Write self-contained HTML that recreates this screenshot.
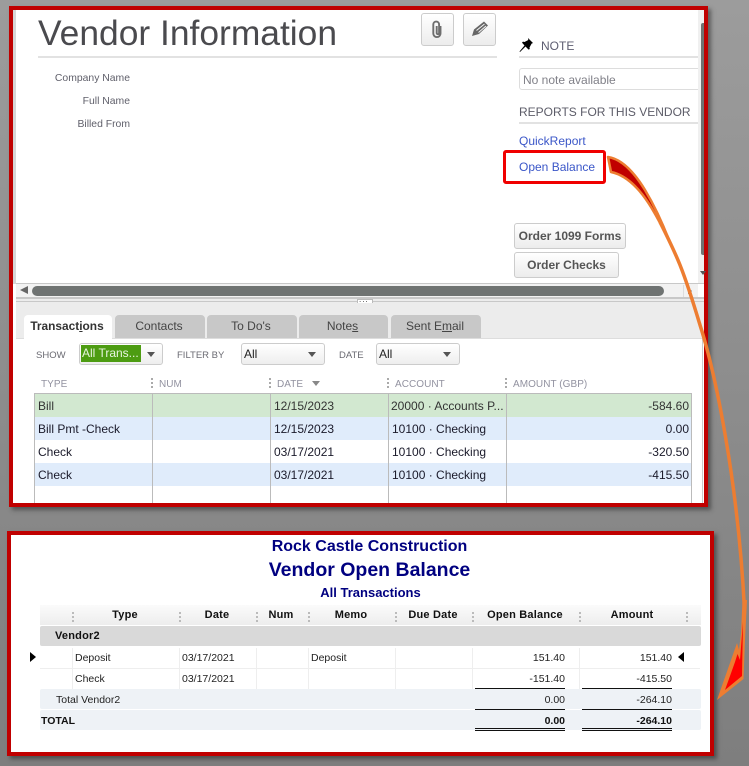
<!DOCTYPE html>
<html><head><meta charset="utf-8">
<style>
html,body{margin:0;padding:0}
body{width:749px;height:766px;overflow:hidden;position:relative;background:linear-gradient(#9c9c9c,#7e7e7e);font-family:"Liberation Sans",sans-serif;}
div,span.a{position:absolute;box-sizing:border-box}
.t{white-space:nowrap;line-height:14px;height:14px}
.lab{font-size:10.4px;color:#5f5f6a;width:100px;text-align:right;left:30px;margin-top:1px}
.btn{background:linear-gradient(#fff,#ececec);border:1px solid #ccc;border-radius:3px}
.ob{font-weight:bold;font-size:12px;color:#555;text-align:center;line-height:24px;white-space:nowrap}
.tab{top:315px;height:23px;background:#c8c8c8;border-radius:4px 4px 0 0;font-size:12px;color:#444;text-align:center;line-height:22px}
.f{font-size:9.5px;color:#6a6a72;top:349px}
.sel{top:343px;height:22px;width:84px;border:1px solid #ccc;border-radius:3px;background:linear-gradient(#fff,#eee)}
.arr{width:0;height:0;border-left:4.5px solid transparent;border-right:4.5px solid transparent;border-top:5px solid #555}
.h{font-size:10px;color:#9292a0;top:378px;letter-spacing:.05px}
.d{width:2px;height:12px;top:378px;background:repeating-linear-gradient(#aaa 0 2px,transparent 2px 4px)}
.r{left:35px;width:657px;height:23px}
.c{font-size:12px;color:#1a1a2a;white-space:nowrap;line-height:14px;margin-top:1px}
.v{top:393px;height:110px;width:1px;background:#bbb}
.rh{font-size:11px;font-weight:bold;color:#111;top:608px;line-height:14px;white-space:nowrap;text-align:center;letter-spacing:.2px}
.dd{width:2px;height:12px;top:612px;background:repeating-linear-gradient(#bbb 0 2px,transparent 2px 4px)}
.rc{font-size:10.5px;color:#222;line-height:14px;white-space:nowrap;margin-top:1px}
.rn{text-align:right;width:90px}
.vl{top:648px;height:41px;width:1px;background:#eee}
.k{height:1px;background:#111;width:90px}
.title{left:21px;width:699px;text-align:center;color:#000080;font-weight:bold;white-space:nowrap}
</style></head><body>

<!-- top panel -->
<div style="left:9px;top:6px;width:699px;height:501px;background:#fff;border:4px solid #c00000;box-shadow:3px 3px 4px rgba(40,40,40,.55)"></div>
<div style="left:13px;top:10px;width:3px;height:274px;background:#d6d6d6"></div>

<div class="t" style="left:38px;top:13px;height:40px;line-height:40px;font-size:35.4px;color:#4a4a4e">Vendor Information</div>
<div style="left:38px;top:56px;width:459px;height:2px;background:#e2e2e2"></div>
<div class="t lab" style="top:71px">Company Name</div>
<div class="t lab" style="top:94px">Full Name</div>
<div class="t lab" style="top:117px">Billed From</div>

<div class="btn" style="left:421px;top:13px;width:33px;height:33px">
<svg width="31" height="31" style="position:absolute;left:0;top:0"><path d="M18.5 12 V19.5 a3.6 3.6 0 0 1-7.2 0 V10.5 a2.9 2.9 0 0 1 5.8 0 V19 a1.2 1.2 0 0 1-2.4 0 V12" fill="none" stroke="#6e6e6e" stroke-width="1.9"/></svg></div>
<div class="btn" style="left:463px;top:13px;width:33px;height:33px">
<svg width="31" height="31" style="position:absolute;left:0;top:0"><path d="M8 22 L10 15.5 L20 7.5 L24 11.5 L15 20 Z" fill="#666"/><path d="M12.5 16.5 L20.5 10 M14.5 18.5 L22 12" stroke="#f4f4f4" stroke-width="1"/></svg></div>

<svg width="16" height="16" style="position:absolute;left:519px;top:37px"><path d="M9 1 L14 6 L12.6 6.6 L10.5 10.5 L10.8 12 L9.6 12.6 L6.5 9.5 L1 15 L0.5 14.5 L5.5 8.5 L3 5.6 L4 4.6 L5.5 5 L9.3 3 Z" fill="#000"/></svg>
<div class="t" style="left:541px;top:39px;font-size:12px;color:#5c5c70">NOTE</div>
<div style="left:519px;top:56px;width:179px;height:2px;background:#e2e2e2"></div>
<div style="left:519px;top:68px;width:185px;height:22px;border:1px solid #ddd;border-radius:3px;background:#fff"></div>
<div class="t" style="left:523px;top:73px;font-size:12px;color:#808088">No note available</div>
<div class="t" style="left:519px;top:105px;font-size:12px;color:#5c5c68">REPORTS FOR THIS VENDOR</div>
<div style="left:519px;top:122px;width:179px;height:2px;background:#e2e2e2"></div>
<div class="t" style="left:519px;top:134px;font-size:12px;color:#3a56c8">QuickReport</div>
<div class="t" style="left:519px;top:160px;font-size:12px;color:#3a56c8">Open Balance</div>
<div style="left:503px;top:150px;width:103px;height:34px;border:3px solid #f00000;border-radius:3px"></div>

<div class="btn ob" style="left:514px;top:223px;width:112px;height:26px">Order 1099 Forms</div>
<div class="btn ob" style="left:514px;top:252px;width:105px;height:26px">Order Checks</div>

<!-- scrollbars -->
<div style="left:698px;top:10px;width:6px;height:274px;background:#f0f0f0"></div>
<div style="left:701px;top:23px;width:3px;height:232px;background:#6f7372;border-radius:2px 0 0 2px"></div>
<div style="left:16px;top:283px;width:688px;height:1px;background:#c8c8c8"></div>
<div style="left:16px;top:284px;width:682px;height:13px;background:#f2f2f2"></div>
<div style="left:32px;top:286px;width:632px;height:10px;background:#6f7372;border-radius:5px"></div>
<div style="left:20px;top:286px;width:0;height:0;border-right:8px solid #666;border-top:4.5px solid transparent;border-bottom:4.5px solid transparent"></div>
<div style="left:683px;top:285px;width:1px;height:12px;background:#ddd"></div>
<div style="left:688px;top:288px;width:0;height:0;border-left:4px solid #555;border-top:3px solid transparent;border-bottom:3px solid transparent"></div>
<div style="left:700px;top:271px;width:0;height:0;border-top:4px solid #555;border-left:3px solid transparent;border-right:3px solid transparent"></div>

<!-- lower panel -->
<div style="left:16px;top:297px;width:688px;height:41px;background:#ececec;border-top:2px solid #c8c8c8"></div>
<div style="left:16px;top:301px;width:688px;height:1px;background:#c8c8c8"></div>
<div style="left:357px;top:299px;width:16px;height:4px;background:#fff;border:1px solid #bbb;border-bottom:0"></div>
<div class="t" style="left:359px;top:296px;font-size:8px;color:#333;letter-spacing:1px;height:8px;line-height:8px">...</div>
<div style="left:16px;top:338px;width:686px;height:1px;background:#ddd"></div>
<div style="left:702px;top:338px;width:1px;height:165px;background:#ccc"></div>

<div class="tab" style="left:24px;width:88px;background:#fff;font-weight:bold;color:#333;height:24px;font-size:11.9px;padding-right:2px">Transac<span>t</span><span style="text-decoration:underline">i</span>ons</div>
<div class="tab" style="left:115px;width:90px;padding-right:2px">Contacts</div>
<div class="tab" style="left:207px;width:90px;padding-right:2px">To Do's</div>
<div class="tab" style="left:299px;width:89px;padding-right:2px">Note<span style="text-decoration:underline">s</span></div>
<div class="tab" style="left:391px;width:90px;padding-right:2px">Sent E<span style="text-decoration:underline">m</span>ail</div>

<div class="t f" style="left:36px">SHOW</div>
<div class="sel" style="left:79px"></div>
<div class="t" style="left:81px;top:345px;width:60px;height:17px;background:#4d9c12;color:#e8f4e0;font-size:12px;line-height:17px;padding-left:1px">All Trans...</div>
<div class="arr" style="left:147px;top:352px"></div>
<div class="t f" style="left:177px">FILTER BY</div>
<div class="sel" style="left:241px"></div>
<div class="t" style="left:244px;top:347px;font-size:12px;color:#222">All</div>
<div class="arr" style="left:308px;top:352px"></div>
<div class="t f" style="left:339px">DATE</div>
<div class="sel" style="left:376px"></div>
<div class="t" style="left:379px;top:347px;font-size:12px;color:#222">All</div>
<div class="arr" style="left:443px;top:352px"></div>

<div class="t h" style="left:41px">TYPE</div>
<div class="d" style="left:151px"></div>
<div class="t h" style="left:159px">NUM</div>
<div class="d" style="left:269px"></div>
<div class="t h" style="left:277px">DATE</div>
<div class="arr" style="left:312px;top:381px;border-top-color:#888"></div>
<div class="d" style="left:387px"></div>
<div class="t h" style="left:395px">ACCOUNT</div>
<div class="d" style="left:505px"></div>
<div class="t h" style="left:513px">AMOUNT (GBP)</div>

<div style="left:34px;top:393px;width:658px;height:1px;background:#bbb"></div>
<div class="r" style="top:394px;background:#d2e8d0"></div>
<div class="r" style="top:417px;background:#e0ecfb"></div>
<div class="r" style="top:463px;background:#e0ecfb"></div>
<div class="v" style="left:34px"></div><div class="v" style="left:152px"></div><div class="v" style="left:270px"></div><div class="v" style="left:388px"></div><div class="v" style="left:506px"></div><div class="v" style="left:691px"></div>

<div class="c" style="left:38px;top:398px;color:#333">Bill</div>
<div class="c" style="left:274px;top:398px;color:#333">12/15/2023</div>
<div class="c" style="left:391px;top:398px;color:#333">20000 · Accounts P...</div>
<div class="c" style="left:589px;width:100px;text-align:right;top:398px;color:#333">-584.60</div>

<div class="c" style="left:38px;top:421px">Bill Pmt -Check</div>
<div class="c" style="left:274px;top:421px">12/15/2023</div>
<div class="c" style="left:392px;top:421px">10100 · Checking</div>
<div class="c" style="left:589px;width:100px;text-align:right;top:421px">0.00</div>

<div class="c" style="left:38px;top:444px">Check</div>
<div class="c" style="left:274px;top:444px">03/17/2021</div>
<div class="c" style="left:392px;top:444px">10100 · Checking</div>
<div class="c" style="left:589px;width:100px;text-align:right;top:444px">-320.50</div>

<div class="c" style="left:38px;top:467px">Check</div>
<div class="c" style="left:274px;top:467px">03/17/2021</div>
<div class="c" style="left:392px;top:467px">10100 · Checking</div>
<div class="c" style="left:589px;width:100px;text-align:right;top:467px">-415.50</div>

<!-- bottom panel -->
<div style="left:7px;top:531px;width:707px;height:225px;background:#fff;border:4px solid #c00000;box-shadow:3px 3px 4px rgba(40,40,40,.55)"></div>
<div class="title" style="left:20px;top:538px;font-size:16px;line-height:18px">Rock Castle Construction</div>
<div class="title" style="left:20px;top:558px;font-size:19.5px;line-height:24px">Vendor Open Balance</div>
<div class="title" style="left:21px;top:585px;font-size:13px;line-height:16px">All Transactions</div>

<div style="left:40px;top:605px;width:661px;height:20px;background:linear-gradient(#fbfbfb,#ededed)"></div>
<div class="rh" style="left:75px;width:100px">Type</div>
<div class="rh" style="left:182px;width:70px">Date</div>
<div class="rh" style="left:258px;width:46px">Num</div>
<div class="rh" style="left:311px;width:80px">Memo</div>
<div class="rh" style="left:398px;width:70px">Due Date</div>
<div class="rh" style="left:475px;width:100px">Open Balance</div>
<div class="rh" style="left:582px;width:100px">Amount</div>
<div class="dd" style="left:72px"></div><div class="dd" style="left:179px"></div><div class="dd" style="left:256px"></div><div class="dd" style="left:308px"></div><div class="dd" style="left:395px"></div><div class="dd" style="left:472px"></div><div class="dd" style="left:579px"></div><div class="dd" style="left:686px"></div>

<div style="left:40px;top:626px;width:661px;height:20px;background:#d9d9d9;border-radius:2px"></div>
<div class="rh" style="left:55px;top:629px;text-align:left">Vendor2</div>

<div class="vl" style="left:72px"></div><div class="vl" style="left:179px"></div><div class="vl" style="left:256px"></div><div class="vl" style="left:308px"></div><div class="vl" style="left:395px"></div><div class="vl" style="left:472px"></div><div class="vl" style="left:579px"></div>
<div style="left:40px;top:668px;width:660px;height:1px;background:#eee"></div>
<div style="left:30px;top:652px;width:0;height:0;border-left:6px solid #000;border-top:5px solid transparent;border-bottom:5px solid transparent"></div>
<div style="left:678px;top:652px;width:0;height:0;border-right:6px solid #000;border-top:5px solid transparent;border-bottom:5px solid transparent"></div>

<div class="rc" style="left:75px;top:650px">Deposit</div>
<div class="rc" style="left:182px;top:650px">03/17/2021</div>
<div class="rc" style="left:311px;top:650px">Deposit</div>
<div class="rc rn" style="left:475px;top:650px">151.40</div>
<div class="rc rn" style="left:582px;top:650px">151.40</div>
<div class="rc" style="left:75px;top:671px">Check</div>
<div class="rc" style="left:182px;top:671px">03/17/2021</div>
<div class="rc rn" style="left:475px;top:671px">-151.40</div>
<div class="rc rn" style="left:582px;top:671px">-415.50</div>

<div style="left:40px;top:689px;width:661px;height:20px;background:#eef2f6;border-radius:2px"></div>
<div style="left:40px;top:710px;width:661px;height:20px;background:#eef2f6;border-radius:2px"></div>
<div class="k" style="left:475px;top:688px"></div><div class="k" style="left:582px;top:688px"></div>
<div class="k" style="left:475px;top:709px"></div><div class="k" style="left:582px;top:709px"></div>
<div class="k" style="left:475px;top:728px"></div><div class="k" style="left:582px;top:728px"></div>
<div class="k" style="left:475px;top:730px"></div><div class="k" style="left:582px;top:730px"></div>

<div class="rc" style="left:56px;top:692px">Total Vendor2</div>
<div class="rc rn" style="left:475px;top:692px">0.00</div>
<div class="rc rn" style="left:582px;top:692px">-264.10</div>
<div class="rc" style="left:41px;top:713px;font-weight:bold;color:#111">TOTAL</div>
<div class="rc rn" style="left:475px;top:713px;font-weight:bold;color:#111">0.00</div>
<div class="rc rn" style="left:582px;top:713px;font-weight:bold;color:#111">-264.10</div>

<!-- arrow -->
<svg width="749" height="766" style="position:absolute;left:0;top:0">
<path d="M660 222 C668 238 674 250 680 265 C688 285 694 305 700 325 C715 372 738 480 744.5 610" fill="none" stroke="#ed7d31" stroke-width="3.5"/>
<path d="M608 157 C622 159 634 172 645 190 C654 205 662 222 669 240 C657 218 640 178 611 172 Z" fill="#c00000" stroke="#ed7d31" stroke-width="2.5" stroke-linejoin="round"/>
<path d="M742.5 600 L747 600 L745 640 L743.5 679 L717 700 L737 643 L739 650 L741 633 Z" fill="#ed7d31"/>
<path d="M743 622 L742 676 L725 690 L735 662 L737.5 654 L740 660 Z" fill="#ff0000"/>
</svg>
</body></html>
